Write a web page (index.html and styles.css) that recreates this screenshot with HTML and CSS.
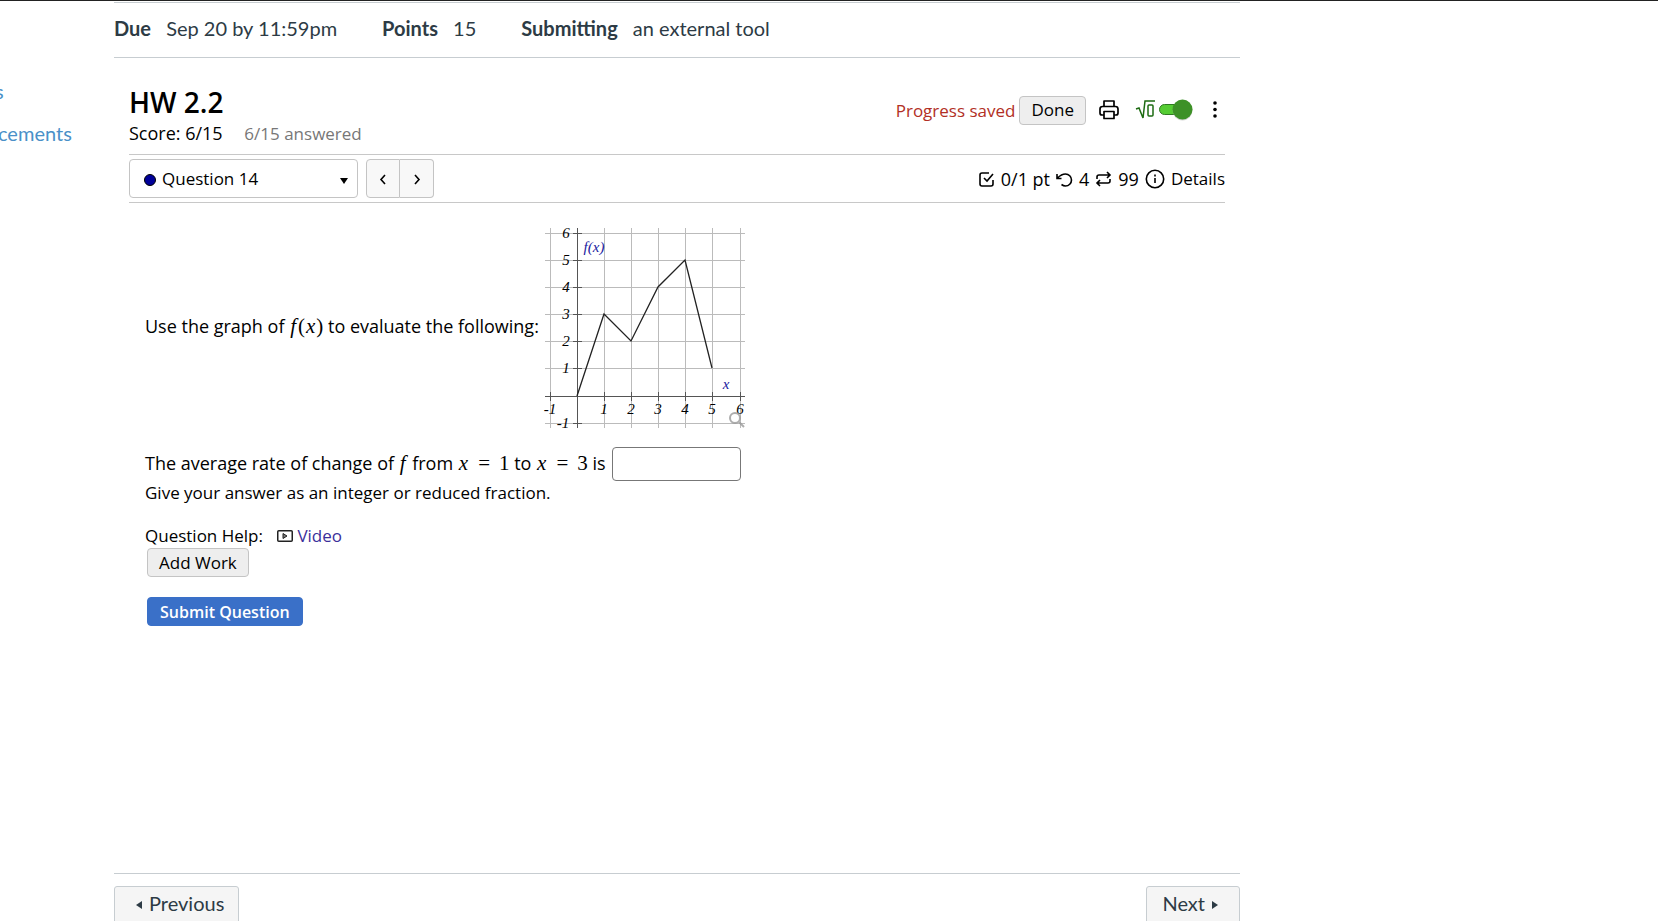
FILE: index.html
```html
<!DOCTYPE html>
<html lang="en">
<head>
  <meta charset="UTF-8">
  <meta name="viewport" content="width=device-width, initial-scale=1.0">
  <title>HW 2.2</title>
  <link rel="stylesheet" href="styles.css">
</head>
<body>
  <!-- Course navigation -->
  <nav class="course-nav">
    <a href="#" class="clipped">s</a>
    <a href="#">cements</a>
  </nav>

  <main>
    <!-- Assignment info -->
    <ul class="assignment-info">
      <li><b>Due</b> <span>Sep 20 by 11:59pm</span></li>
      <li><b>Points</b> <span>15</span></li>
      <li><b>Submitting</b> <span>an external tool</span></li>
    </ul>

    <div class="tool">
      <header class="tool-header">
        <div>
          <h1>HW 2.2</h1>
          <p class="score">Score: 6/15 <span>6/15 answered</span></p>
        </div>
        <div class="tool-actions">
          <span class="saved">Progress saved</span>
          <button type="button" class="btn">Done</button>
          <button type="button" class="icon-btn print" aria-label="Print">
            <svg width="20" height="20" viewBox="0 0 20 20" fill="none" stroke="#000" stroke-width="1.7" stroke-linejoin="round">
              <path d="M5 6.500V1h10v5.500M5 15H3q-2 0-2-2V9q0-2.500 2.500-2.500h13Q19 6.500 19 9v4q0 2-2 2h-2M5 11.500h10v7H5z"/>
            </svg>
          </button>
          <button type="button" class="icon-btn math" aria-label="Math entry">
            <svg width="58" height="24" viewBox="0 0 58 24">
              <path d="M1 11l3-1 4 10 2-17h10" fill="none" stroke="#1d6b12" stroke-width="1.5"/>
              <rect x="13" y="7" width="5" height="11" rx="1" fill="none" stroke="#1d6b12" stroke-width="1.5"/>
              <rect x="24.500" y="6.500" width="26" height="10" rx="5" fill="#5c3" stroke="#2f7a22"/>
              <circle cx="47.500" cy="12.500" r="10" fill="#aaa" opacity=".5"/>
              <circle cx="47.500" cy="11.500" r="10" fill="#3d9127"/>
            </svg>
          </button>
          <button type="button" class="icon-btn" aria-label="More options">
            <svg width="20" height="20" viewBox="0 0 20 20">
              <circle cx="10" cy="3" r="1.800"/><circle cx="10" cy="9.500" r="1.800"/><circle cx="10" cy="16" r="1.800"/>
            </svg>
          </button>
        </div>
      </header>

      <!-- Question picker -->
      <div class="question-bar">
        <div class="picker">
          <select aria-label="Question">
            <option>Question 14</option>
          </select>
          <span class="dot"></span>
          <span class="caret"></span>
        </div>
        <div class="pager">
          <button type="button" aria-label="Previous question">
            <svg width="8" height="12" viewBox="0 0 8 12"><path d="M6 2L2 6.500l4 4.500"/></svg>
          </button>
          <button type="button" aria-label="Next question">
            <svg width="8" height="12" viewBox="0 0 8 12"><path d="M2 2l4 4.500-4 4.500"/></svg>
          </button>
        </div>
        <div class="details">
          <svg width="16" height="16" viewBox="0 0 16 16"><path d="M10 2H3Q1 2 1 4v9q0 2 2 2h9q2 0 2-2V9M5 7l3 3 6-7"/></svg>
          <span>0/1 pt</span>
          <svg width="17" height="16" viewBox="0 0 17 16"><path d="M1 3v4.500h4.500M1.500 7C4 4.500 6.500 3 9.500 3a6 6 0 0 1 0 12q-2 0-4-1.500"/></svg>
          <span>4</span>
          <svg width="17" height="16" viewBox="0 0 17 16"><path d="M2 8V6q0-2 2-2h11M12 1l3 3-3 3M15 8v2q0 2-2 2H2M5 9l-3 3 3 3"/></svg>
          <span>99</span>
          <button type="button" class="details-btn">
            <svg width="20" height="20" viewBox="0 0 20 20"><circle cx="10" cy="10" r="8.700"/><path d="M10 9v5M10 5.500v2"/></svg>
            Details
          </button>
        </div>
      </div>

      <!-- Question -->
      <form class="question">
        <div class="prompt">
          <p>Use the graph of <i class="math-text func">f</i><span class="math-text">(</span><i class="math-text var">x</i><span class="math-text">)</span> to evaluate the following:</p>
          <svg class="graph" width="200" height="200" viewBox="0 0 200 200" role="img" aria-label="Graph of f(x)">
            <g class="grid">
              <path d="M5.500 0V200M59.500 0V200M86.500 0V200M113.500 0V200M140.500 0V200M167.500 0V200M195.500 0V200"/>
              <path d="M0 5.500H200M0 32.500H200M0 59.500H200M0 86.500H200M0 113.500H200M0 140.500H200M0 195.500H200"/>
            </g>
            <g class="axes">
              <path d="M32.500 0V200M0 168.500H200"/>
              <path d="M5.500 164v9M59.500 164v9M86.500 164v9M113.500 164v9M140.500 164v9M167.500 164v9M195.500 164v9"/>
              <path d="M28 5.500h9M28 32.500h9M28 59.500h9M28 86.500h9M28 113.500h9M28 140.500h9M28 195.500h9"/>
            </g>
            <path class="plot" d="M32 168L59 86 86 113 113 59 140 32 167 140"/>
            <g class="labels">
              <text x="21" y="10">6</text><text x="21" y="37">5</text><text x="21" y="64">4</text>
              <text x="21" y="91">3</text><text x="21" y="118">2</text><text x="21" y="145">1</text>
              <text x="18" y="200">-1</text>
              <text x="5" y="186">-1</text><text x="59" y="186">1</text><text x="86" y="186">2</text>
              <text x="113" y="186">3</text><text x="140" y="186">4</text><text x="167" y="186">5</text>
              <text x="195" y="186">6</text>
              <text x="49" y="24" class="name">f(x)</text><text x="181" y="161" class="name">x</text>
            </g>
            <g fill="none" stroke="#999" stroke-width="2" opacity=".8"><circle cx="190" cy="190" r="5"/><path d="M194 194l5 5"/></g>
          </svg>
        </div>
        <p class="answer-line">
          <label for="answer">The average rate of change of <i class="math-text func">f</i> from <i class="math-text var">x</i><span class="math-text eq">=</span><span class="math-text">1</span> to <i class="math-text var">x</i><span class="math-text eq">=</span><span class="math-text">3</span> is</label>
          <input type="text" id="answer">
        </p>
        <p class="note">Give your answer as an integer or reduced fraction.</p>

        <div class="help">
          <span>Question Help:</span>
          <a href="#">
            <svg width="16" height="12" viewBox="0 0 16 12"><rect x=".75" y=".75" width="14.500" height="10.500" rx="1" fill="none" stroke="#222" stroke-width="1.500"/><path d="M6 3.500l4 2.500-4 2.500z" fill="#777" stroke="#222"/></svg>
            Video</a>
        </div>
        <button type="button" class="btn add-work">Add Work</button>
        <button type="submit" class="btn submit">Submit Question</button>
      </form>
    </div>

    <!-- Module footer -->
    <footer>
      <a href="#" class="module-btn"><span class="arrow-left"></span>Previous</a>
      <a href="#" class="module-btn">Next<span class="arrow-right"></span></a>
    </footer>
  </main>
</body>
</html>
```
FILE: styles.css
```css
/* Global Styles */
* {
  margin: 0;
  padding: 0;
  box-sizing: border-box;
}

body {
  display: flex;
  height: 100vh;
  overflow: hidden;
  border-top: 1px solid #222;
  background-color: #fff;
  color: #2d3b45;
  font-family: Lato, sans-serif;
  font-size: 20px;
}

button,
input,
select {
  font: inherit;
  color: inherit;
}

/* Course navigation */
.course-nav {
  display: flex;
  flex-direction: column;
  flex: 0 0 114px;
  gap: 12px;
  padding-top: 75px;
  overflow: hidden;
}

.course-nav a {
  margin-left: -2px;
  color: #4a90c8;
  line-height: 30px;
  text-decoration: none;
}

.course-nav .clipped {
  margin-left: -5px;
}

main {
  display: flex;
  flex-direction: column;
  flex: 1;
  margin: 1px 418px 0 0;
}

/* Assignment info */
.assignment-info {
  display: flex;
  gap: 45px;
  padding: 10px 0 13px;
  border-top: 1px solid #c7cdd1;
  border-bottom: 1px solid #c7cdd1;
  line-height: 31px;
  list-style: none;
}

.assignment-info b {
  margin-right: 10px;
}

/* Homework tool */
.tool {
  flex: 1;
  padding: 28px 15px 0;
  color: #000;
  font-family: "Trebuchet MS", "Open Sans", sans-serif;
  font-size: 17px;
}

.tool-header {
  display: flex;
  justify-content: space-between;
  height: 68px;
}

h1 {
  font-size: 28px;
  font-weight: 600;
  line-height: 32px;
}

.score {
  font-size: 18px;
  line-height: 30px;
}

.score span {
  margin-left: 17px;
  color: #777;
  font-size: 17px;
}

.tool-actions {
  display: flex;
  align-items: center;
  height: 48px;
}

.saved {
  margin-right: 4px;
  color: #b22f25;
}

.btn {
  height: 29px;
  padding: 0 11px;
  border: 1px solid #c4c4c4;
  border-radius: 4px;
  background-color: #eee;
  line-height: 20px;
}

.icon-btn {
  display: flex;
  border: none;
  background: none;
}

.print {
  margin: 0 16px 0 13px;
}

.math {
  margin-right: 12px;
}

/* Question picker */
.question-bar {
  display: flex;
  align-items: center;
  gap: 8px;
  padding: 4px 0;
  border-top: 1px solid #c8c8c8;
  border-bottom: 1px solid #c8c8c8;
}

.picker {
  position: relative;
  width: 229px;
}

.picker select {
  width: 100%;
  height: 39px;
  padding-left: 32px;
  border: 1px solid #c4c4c4;
  border-radius: 4px;
  background-color: #fff;
  appearance: none;
}

.dot {
  position: absolute;
  top: 15px;
  left: 15px;
  width: 12px;
  height: 12px;
  border: 1px solid #000;
  border-radius: 50%;
  background-color: #009;
}

.caret {
  position: absolute;
  top: 19px;
  right: 10px;
  border: 4px solid transparent;
  border-top: 6px solid #000;
  border-bottom: none;
}

.pager {
  display: flex;
}

.pager button {
  width: 34px;
  height: 39px;
  border: 1px solid #c4c4c4;
  border-radius: 4px 0 0 4px;
  background-color: #f8f8f8;
}

.pager button + button {
  border-left: none;
  border-radius: 0 4px 4px 0;
}

.pager svg,
.details svg {
  fill: none;
  stroke: #000;
  stroke-width: 1.6;
}

.details {
  display: flex;
  align-items: center;
  gap: 6px;
  margin-left: auto;
}

.details span {
  font-size: 18px;
}

.details-btn {
  display: flex;
  align-items: center;
  gap: 6px;
  border: none;
  background: none;
}

/* Question */
.question {
  padding: 25px 16px 0;
  line-height: 30px;
}

.prompt,
.answer-line {
  display: flex;
  align-items: center;
  gap: 6px;
  font-size: 18px;
}

.prompt {
  margin-bottom: 19px;
}

.graph {
  overflow: visible;
}

.prompt p {
  padding-bottom: 4px;
}

.math-text {
  font-family: "Liberation Serif", serif;
  font-size: 21px;
  line-height: 20px;
}

.func {
  margin: 0 2px 0 1px;
}

.var {
  margin: 0 1px;
}

.eq {
  margin: 0 9px;
}

.answer-line label {
  padding-bottom: 2px;
}

.answer-line input {
  width: 129px;
  height: 34px;
  padding: 0 6px;
  border: 1px solid #777;
  border-radius: 4px;
}

.note {
  line-height: 24px;
}

.grid {
  stroke: #bbb;
}

.axes {
  stroke: #555;
}

.plot {
  fill: none;
  stroke: #222;
  stroke-width: 1.3;
}

.labels {
  font: italic 15px "Liberation Serif", serif;
  text-anchor: middle;
}

.labels .name {
  fill: #1a1aa0;
}

.help {
  display: flex;
  gap: 14px;
  margin-top: 19px;
  line-height: 24px;
}

.help a {
  color: #3b2f9b;
  text-decoration: none;
}

.add-work,
.submit {
  display: block;
  margin-left: 2px;
}

.submit {
  margin-top: 20px;
  padding: 0 12px;
  border-color: #3a70c8;
  background-color: #3a70c8;
  color: #fff;
  font-size: 16px;
  font-weight: 600;
}

/* Module footer */
footer {
  display: flex;
  justify-content: space-between;
  flex: 0 0 48px;
  min-height: 0;
  padding-top: 12px;
  border-top: 1px solid #c7cdd1;
}

.module-btn {
  display: flex;
  align-items: center;
  gap: 7px;
  height: 38px;
  padding: 0 14px 4px 21px;
  border: 1px solid #c7cdd1;
  border-radius: 3px;
  background-color: #f5f5f5;
  color: #2d3b45;
  text-decoration: none;
}

.module-btn:last-child {
  padding: 0 21px 4px 15px;
}

.arrow-left,
.arrow-right {
  margin-top: 3px;
  border: 4px solid transparent;
}

.arrow-left {
  border-right: 6px solid #2d3b45;
  border-left: none;
}

.arrow-right {
  border-right: none;
  border-left: 6px solid #2d3b45;
}
```
